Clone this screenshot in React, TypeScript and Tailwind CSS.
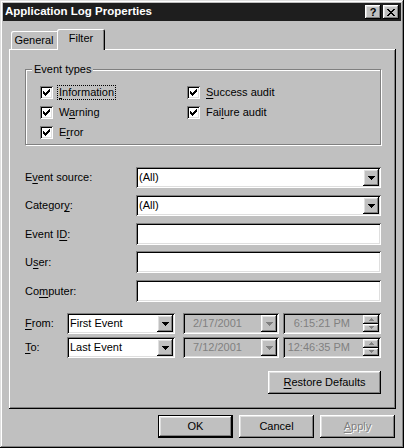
import React from "react";

const raised =
  "shadow-[inset_-1px_-1px_#000,inset_1px_1px_#fff,inset_-2px_-2px_#808080,inset_2px_2px_#dfdfdf]";
const sunken =
  "shadow-[inset_1px_1px_#808080,inset_-1px_-1px_#fff,inset_2px_2px_#000,inset_-2px_-2px_#dfdfdf]";

function U({ children }: { children: React.ReactNode }) {
  return <span className="underline underline-offset-[2px]">{children}</span>;
}

const checkCols = [
  [3, 5],
  [4, 6],
  [5, 7],
  [6, 6],
  [7, 5],
  [8, 4],
  [9, 3],
];

function CheckBox() {
  return (
    <span className={`block w-[13px] h-[13px] shrink-0 bg-white ${sunken}`}>
      <svg width="13" height="13" viewBox="0 0 13 13" shapeRendering="crispEdges">
        {checkCols.map(([x, y]) => (
          <rect key={x} x={x} y={y} width="1" height="3" fill="#000" />
        ))}
      </svg>
    </span>
  );
}

function Check({ children, focus }: { children: React.ReactNode; focus?: boolean }) {
  return (
    <div className="flex items-center h-[20px] gap-[4px]">
      <CheckBox />
      <span
        className={`px-[1px] leading-[13px] ${
          focus ? "border border-dotted border-black" : "border border-transparent"
        }`}
      >
        {children}
      </span>
    </div>
  );
}

function Arrow({ color = "#000" }: { color?: string }) {
  return (
    <svg width="7" height="4" viewBox="0 0 7 4" shapeRendering="crispEdges">
      <path d="M0 0h7v1h-1v1h-1v1h-1v1h-1v-1h-1v-1h-1v-1h-1z" fill={color} />
    </svg>
  );
}

function DropBtn({ disabled }: { disabled?: boolean }) {
  return (
    <span className={`flex w-[16px] h-full shrink-0 items-center justify-center bg-[#c0c0c0] ${raised}`}>
      <Arrow color={disabled ? "#808080" : "#000"} />
    </span>
  );
}

function Combo({ value, className = "" }: { value: string; className?: string }) {
  return (
    <div className={`flex h-[21px] bg-white p-[2px] ${sunken} ${className}`}>
      <span className="flex flex-1 items-center pl-[1px]">{value}</span>
      <DropBtn />
    </div>
  );
}

function DateBox({ value }: { value: string }) {
  return (
    <div className={`flex h-[21px] w-[96px] bg-[#c0c0c0] p-[2px] ${sunken}`}>
      <span className="flex flex-1 items-center pl-[8px] text-[#808080]">{value}</span>
      <DropBtn disabled />
    </div>
  );
}

function SpinHalf({ up }: { up?: boolean }) {
  return (
    <span className={`flex flex-1 items-center justify-center bg-[#c0c0c0] ${raised}`}>
      <svg width="5" height="3" viewBox="0 0 5 3" shapeRendering="crispEdges">
        <path
          d={up ? "M2 0h1v1h1v1h1v1h-5v-1h1v-1h1z" : "M0 0h5v1h-1v1h-1v1h-1v-1h-1v-1h-1z"}
          fill="#808080"
        />
      </svg>
    </span>
  );
}

function TimeBox({ value }: { value: string }) {
  return (
    <div className={`flex h-[21px] w-[98px] bg-[#c0c0c0] p-[2px] ${sunken}`}>
      <span className="flex flex-1 items-center justify-end pr-[13px] text-[#808080]">{value}</span>
      <span className="flex w-[16px] flex-col">
        <SpinHalf up />
        <SpinHalf />
      </span>
    </div>
  );
}

function Field({ label, children }: { label: React.ReactNode; children: React.ReactNode }) {
  return (
    <div className="flex items-center">
      <span className="w-[111px] shrink-0">{label}</span>
      <div className="flex-1">{children}</div>
    </div>
  );
}

function Button({
  children,
  def,
  disabled,
  className = "",
}: {
  children: React.ReactNode;
  def?: boolean;
  disabled?: boolean;
  className?: string;
}) {
  const face = (
    <span
      className={`flex h-full w-full items-center justify-center bg-[#c0c0c0] ${raised} ${
        disabled ? "text-[#808080] [text-shadow:1px_1px_#fff]" : ""
      }`}
    >
      {children}
    </span>
  );
  return (
    <div className={`h-[23px] w-[75px] ${def ? "border border-black" : ""} ${className}`}>{face}</div>
  );
}

export default function App() {
  return (
    <div
      className="w-[404px] h-[448px] bg-[#c0c0c0] p-[3px] text-[11px] leading-none text-black font-['Liberation_Sans',Arial,sans-serif] shadow-[inset_-1px_-1px_#000,inset_1px_1px_#dfdfdf,inset_-2px_-2px_#808080,inset_2px_2px_#fff]"
    >
      {/* title bar */}
      <div className="flex h-[18px] items-center justify-between bg-[#1e1e1e] pl-[2px] pr-[2px]">
        <span className="text-[11.5px] font-bold text-white">Application Log Properties</span>
        <div className="flex gap-[2px]">
          <span
            className={`flex h-[14px] w-[16px] items-center justify-center bg-[#c0c0c0] text-[11px] font-bold ${raised}`}
          >
            ?
          </span>
          <span className={`flex h-[14px] w-[16px] items-center justify-center bg-[#c0c0c0] ${raised}`}>
            <svg width="8" height="7" viewBox="0 0 8 7" shapeRendering="crispEdges">
              <path
                d="M0 0h2v1h1v1h2v-1h1v-1h2v1h-1v1h-1v1h-1v1h1v1h1v1h1v1h-2v-1h-1v-1h-2v1h-1v1h-2v-1h1v-1h1v-1h1v-1h-1v-1h-1v-1h-1z"
                fill="#000"
              />
            </svg>
          </span>
        </div>
      </div>

      {/* tabs + panel */}
      <div className="ml-[6px] mr-[5px] mt-[8px]">
        <div className="flex h-[20px] items-end pl-[2px]">
          <div className="flex h-[18px] w-[48px] items-center justify-center rounded-tl-[2px] rounded-tr-[2px] pt-[1px] pr-[2px] shadow-[inset_1px_1px_#fff,inset_-1px_0_#000,inset_-2px_0_#808080]">
            General
          </div>
          <div className="relative z-10 -mb-[1px] -ml-[2px] flex h-[21px] w-[48px] items-start justify-center rounded-tl-[2px] rounded-tr-[2px] bg-[#c0c0c0] pt-[4px] shadow-[inset_1px_1px_#fff,inset_-1px_0_#000,inset_-2px_0_#808080]">
            Filter
          </div>
        </div>

        <div
          className={`h-[360px] pl-[16px] pr-[15px] pt-[20px] shadow-[inset_-1px_-1px_#000,inset_1px_1px_#fff,inset_-2px_-2px_#808080]`}
        >
          {/* group box */}
          <div className="relative h-[76px] border border-[#808080] shadow-[inset_1px_1px_#fff,1px_1px_#fff]">
            <span className="absolute -top-[6px] left-[6px] bg-[#c0c0c0] px-[2px]">Event types</span>
            <div className="grid grid-cols-[147px_1fr] pl-[14px] pt-[12px]">
              <Check focus>
                <U>I</U>nformation
              </Check>
              <Check>
                <U>S</U>uccess audit
              </Check>
              <Check>
                W<U>a</U>rning
              </Check>
              <Check>
                Fai<U>l</U>ure audit
              </Check>
              <Check>
                E<U>r</U>ror
              </Check>
            </div>
          </div>

          <div className="mt-[22px]">
            <Field
              label={
                <>
                  E<U>v</U>ent source:
                </>
              }
            >
              <Combo value="(All)" />
            </Field>
          </div>
          <div className="mt-[7px]">
            <Field
              label={
                <>
                  Categor<U>y</U>:
                </>
              }
            >
              <Combo value="(All)" />
            </Field>
          </div>
          <div className="mt-[7px]">
            <Field
              label={
                <>
                  Event I<U>D</U>:
                </>
              }
            >
              <div className={`h-[22px] bg-white ${sunken}`} />
            </Field>
          </div>
          <div className="mt-[6px]">
            <Field
              label={
                <>
                  U<U>s</U>er:
                </>
              }
            >
              <div className={`h-[22px] bg-white ${sunken}`} />
            </Field>
          </div>
          <div className="mt-[7px]">
            <Field
              label={
                <>
                  Co<U>m</U>puter:
                </>
              }
            >
              <div className={`h-[22px] bg-white ${sunken}`} />
            </Field>
          </div>

          <div className="mt-[11px] flex items-center">
            <span className="w-[42px] shrink-0">
              <U>F</U>rom:
            </span>
            <Combo value="First Event" className="w-[108px]" />
            <div className="ml-[8px]">
              <DateBox value="2/17/2001" />
            </div>
            <div className="ml-[4px]">
              <TimeBox value="6:15:21 PM" />
            </div>
          </div>
          <div className="mt-[3px] flex items-center">
            <span className="w-[42px] shrink-0">
              <U>T</U>o:
            </span>
            <Combo value="Last Event" className="w-[108px]" />
            <div className="ml-[8px]">
              <DateBox value="7/12/2001" />
            </div>
            <div className="ml-[4px]">
              <TimeBox value="12:46:35 PM" />
            </div>
          </div>

          <div className="mt-[13px] flex justify-end">
            <Button className="w-[113px]">
              <span>
                <U>R</U>estore Defaults
              </span>
            </Button>
          </div>
        </div>
      </div>

      {/* dialog buttons */}
      <div className="mt-[6px] flex justify-end gap-[6px] pr-[6px]">
        <Button def>OK</Button>
        <Button>Cancel</Button>
        <Button disabled>
          <span>
            <U>A</U>pply
          </span>
        </Button>
      </div>
    </div>
  );
}
